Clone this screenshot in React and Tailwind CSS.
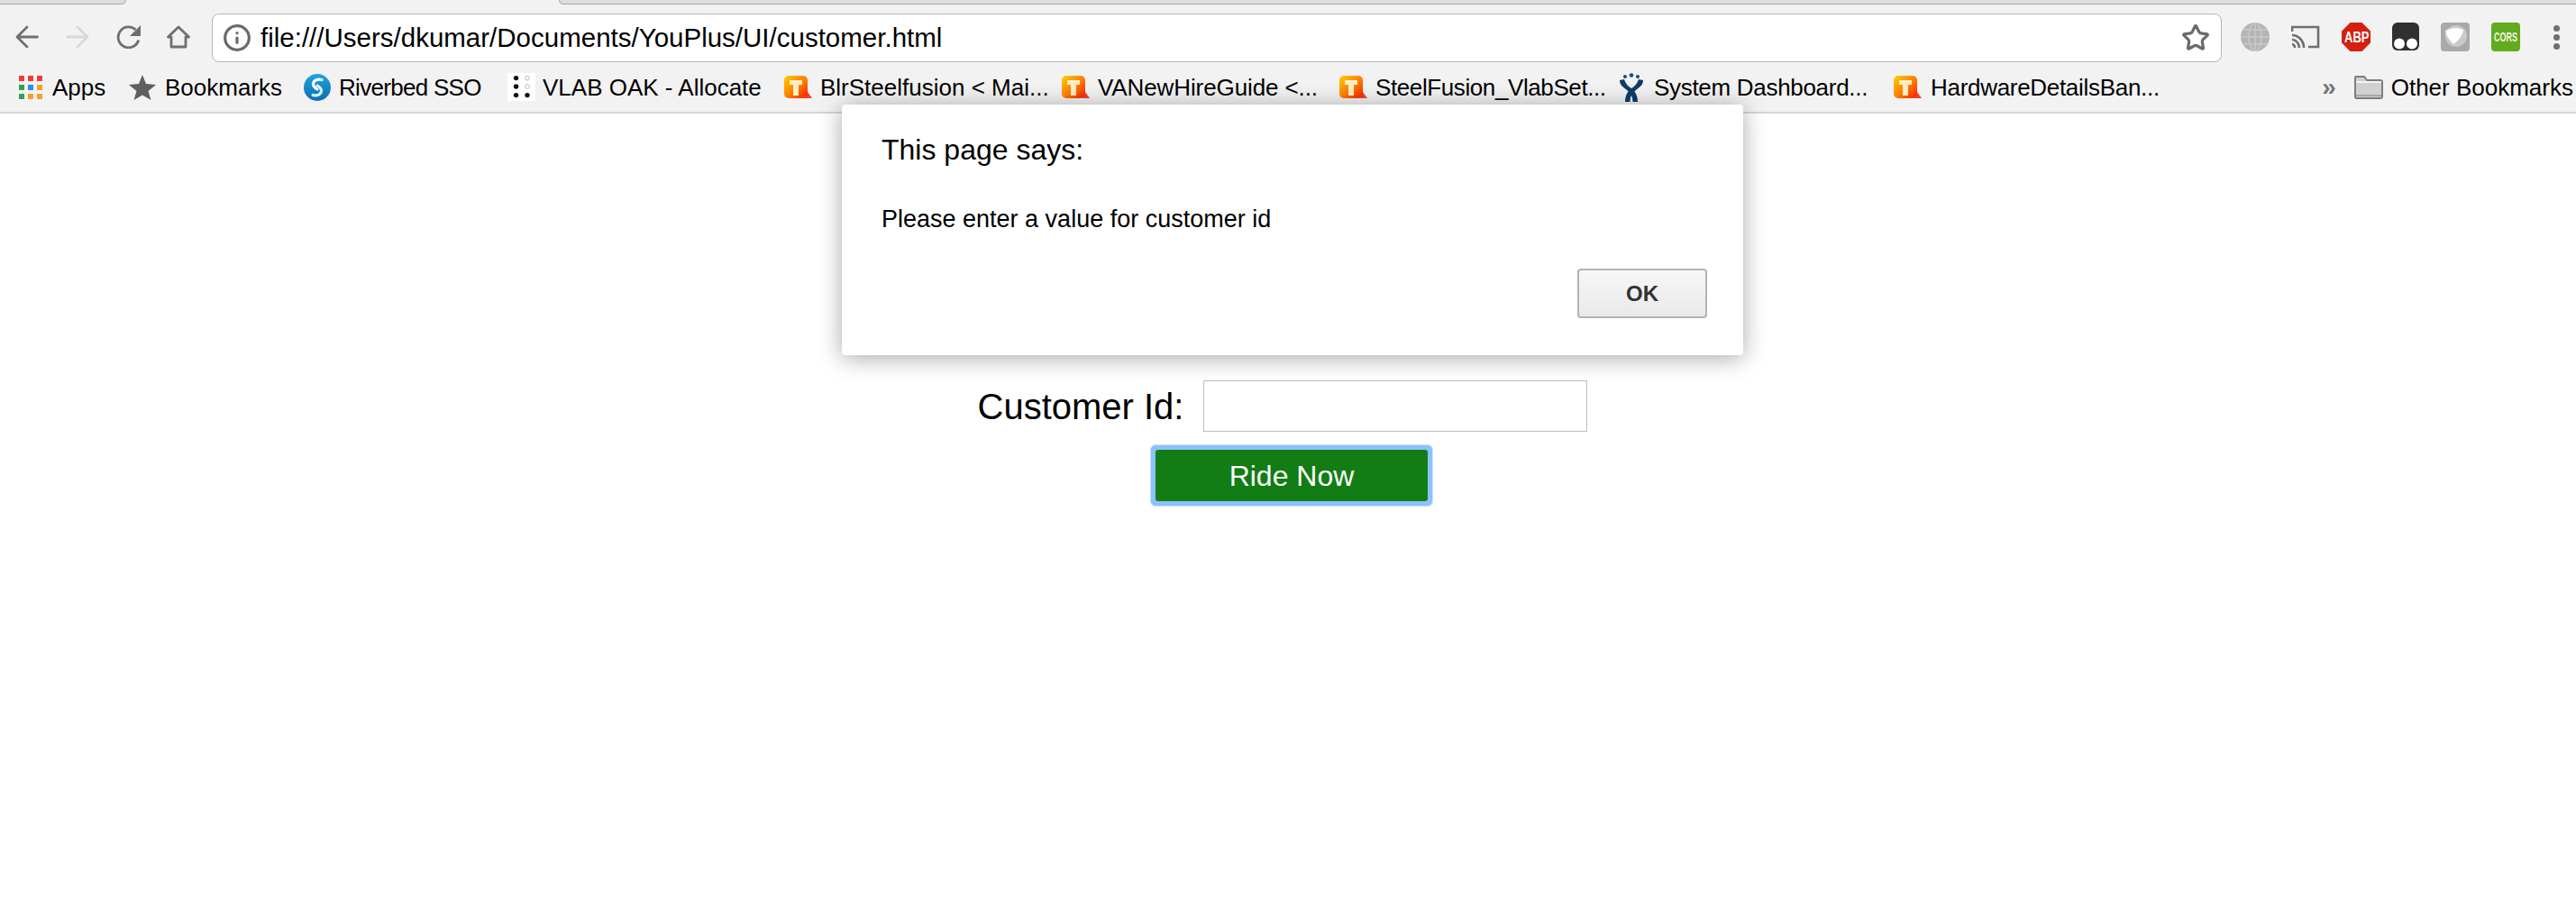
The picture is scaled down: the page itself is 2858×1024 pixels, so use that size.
import { Info, Star } from "lucide-react";

const font = "font-['Liberation_Sans',Arial,sans-serif]";

// orange "T" favicon used by several bookmarks
const TIcon = () => (
  <svg width="32" height="26" viewBox="0 0 32 26" className="shrink-0">
    <defs>
      <linearGradient id="tg" x1="0" y1="0" x2="1" y2="1">
        <stop offset="0" stopColor="#ffcf00" />
        <stop offset="0.55" stopColor="#ff7a00" />
        <stop offset="1" stopColor="#f21d00" />
      </linearGradient>
    </defs>
    <path d="M26 18l5 7h-8z" fill="#f5402a" />
    <rect x="0" y="0" width="26" height="25" rx="5" fill="url(#tg)" />
    <path d="M6 5h14v5h-4v12h-6V10H6z" fill="#ffeec4" />
  </svg>
);

const AppsIcon = () => {
  const colors = ["#f4393b", "#f4393b", "#f4393b", "#34a05a", "#2a8ff0", "#f2a227", "#34a05a", "#f2a227", "#f2a227"];
  return (
    <div className="grid grid-cols-3 gap-[4px] w-[26px] shrink-0">
      {colors.map((c, i) => (
        <div key={i} className="w-[6px] h-[6px]" style={{ background: c }} />
      ))}
    </div>
  );
};

const BookmarkStar = () => (
  <svg width="30" height="28" viewBox="0 0 30 28" className="shrink-0">
    <path d="M15 0l4 10 11 1-8.500 7 3 10-9.500-5.500L5.500 28l3-10L0 11l11-1z" fill="#5f5f5f" />
  </svg>
);

const RiverbedIcon = () => (
  <svg width="30" height="30" viewBox="0 0 30 30" className="shrink-0">
    <defs>
      <linearGradient id="rb" x1="0" y1="0" x2="0" y2="1">
        <stop offset="0" stopColor="#22a3dd" />
        <stop offset="1" stopColor="#0b6fb0" />
      </linearGradient>
    </defs>
    <circle cx="15" cy="15" r="15" fill="url(#rb)" />
    <path d="M20 6.500c-5-1.500-9.500 1-9.500 5 0 2.500 2 4 4.500 5.500" fill="none" stroke="#fff" strokeWidth="3.200" strokeLinecap="round" />
    <path d="M10 23.500c5 1.500 9.500-1 9.500-5 0-2.500-2-4-4.500-5.500" fill="none" stroke="#d8f0fb" strokeWidth="3.200" strokeLinecap="round" />
  </svg>
);

const VlabIcon = () => (
  <svg width="31" height="31" viewBox="0 0 31 31" className="shrink-0">
    <rect width="31" height="31" fill="#fff" />
    <circle cx="9.600" cy="5.600" r="2.700" fill="#111" />
    <circle cx="9.600" cy="15" r="2.700" fill="#111" />
    <circle cx="9.600" cy="24.600" r="2.700" fill="#111" />
    <circle cx="22" cy="24.600" r="2.700" fill="#111" />
    <circle cx="22" cy="5.600" r="2.400" fill="#fff" stroke="#bbb" />
    <circle cx="22" cy="15" r="2.400" fill="#fff" stroke="#bbb" />
  </svg>
);

const JiraIcon = () => (
  <svg width="26" height="32" viewBox="0 0 26 32" className="shrink-0">
    <circle cx="13" cy="2.500" r="2.300" fill="#1b4a78" />
    <circle cx="6" cy="4" r="2" fill="#1b4a78" />
    <circle cx="20" cy="4" r="2" fill="#1b4a78" />
    <path d="M0 8L5 7C7 13 10 15 13 17C17 20 20 25 20 32H14.500C14.500 26 12 22 8 19C3 15 0 13 0 8Z" fill="#0f3d68" />
    <path d="M26 8L21 7C19 13 16 15 13 17C9 20 6 25 6 32H11.500C11.500 26 14 22 18 19C23 15 26 13 26 8Z" fill="#0f3d68" />
  </svg>
);

const Bookmark = ({ icon, label, className }) => (
  <div className={`flex items-center ${className}`}>
    {icon}
    <span className="text-[26px] leading-none text-black whitespace-nowrap">{label}</span>
  </div>
);

const BackArrow = ({ className }) => (
  <svg width="26" height="26" viewBox="0 0 26 26" fill="none" stroke="currentColor" strokeWidth="2.800" strokeLinecap="round" strokeLinejoin="round" className={className}>
    <path d="M24.500 13H2M13 2L2 13l11 11" />
  </svg>
);

const ReloadIcon = () => (
  <svg width="28" height="26" viewBox="0 0 28 26" className="shrink-0">
    <path d="M21.500 5A11.500 11.500 0 1 0 24.700 16.500" fill="none" stroke="currentColor" strokeWidth="2.800" />
    <path d="M27 0v12H15z" fill="currentColor" />
  </svg>
);

const HomeIcon = () => (
  <svg width="26" height="26" viewBox="0 0 26 26" fill="none" stroke="currentColor" strokeWidth="2.800" strokeLinejoin="round" className="shrink-0">
    <path d="M1.500 13L13 2l11.500 11H21v11H5V13z" />
  </svg>
);

const Globe = () => (
  <svg width="32" height="32" viewBox="0 0 32 32" fill="none" stroke="#c9c9c9" strokeWidth="1.500">
    <circle cx="16" cy="16" r="16" fill="#b4b4b4" stroke="none" />
    <ellipse cx="16" cy="16" rx="7" ry="15.500" />
    <path d="M16 0v32M0 16h32M3 8h26M3 24h26" />
  </svg>
);

const Cast = () => (
  <svg width="32" height="26" viewBox="0 0 32 26" fill="none" stroke="#6f6f6f" strokeWidth="2.600">
    <path d="M1 7V2h29v22H19" />
    <path d="M1 11c7 0 13 6 13 14M1 16c4 0 8 4 8 9M1 21c2 0 3 2 3 4" />
  </svg>
);

const Abp = () => (
  <svg width="32" height="32" viewBox="0 0 32 32">
    <path d="M9.500 0h13L32 9.500v13L22.500 32h-13L0 22.500v-13z" fill="#d5200f" />
    <text transform="translate(3 21.500) scale(1 1.250)" fontSize="13" fontWeight="700" fill="#fff" fontFamily="Liberation Sans">ABP</text>
  </svg>
);

const Tampermonkey = () => (
  <svg width="30" height="32" viewBox="0 0 30 32">
    <rect width="30" height="31" rx="6" fill="#2f2f2f" />
    <circle cx="8" cy="23.500" r="6" fill="#fff" />
    <circle cx="22" cy="23.500" r="6" fill="#fff" />
  </svg>
);

const GreyExt = () => (
  <svg width="32" height="32" viewBox="0 0 32 32">
    <rect width="32" height="32" rx="4" fill="#a9a9a9" />
    <circle cx="17" cy="15" r="12" fill="#c9c9c9" />
    <path d="M5 9c5-3 14-4 20-1-1 8-6 12-11 16-4-4-8-9-9-15z" fill="#fff" />
  </svg>
);

const Cors = () => (
  <svg width="32" height="32" viewBox="0 0 32 32">
    <rect width="32" height="32" rx="4" fill="#63ab1e" />
    <text transform="translate(3 21) scale(0.820 1.400)" fontSize="11" fontWeight="700" fill="#eef7df" fontFamily="Liberation Sans">CORS</text>
  </svg>
);

const FolderIcon = () => (
  <svg width="32" height="26" viewBox="0 0 32 26" className="shrink-0">
    <path d="M1 2a1 1 0 0 1 1-1h9l3 4h15a2 2 0 0 1 2 2v16a2 2 0 0 1-2 2H3a2 2 0 0 1-2-2z" fill="#d0d0d0" stroke="#7d7d7d" strokeWidth="2" />
    <path d="M2 7h28" stroke="#f4f4f4" strokeWidth="2" />
    <path d="M2 21h28v2H2z" fill="#a8a8a8" />
  </svg>
);

export default function App() {
  return (
    <div className={`relative w-[2858px] h-[1024px] bg-white overflow-hidden ${font}`}>
      {/* tab strip */}
      <div className="h-[5px] flex bg-[#f2f2f2]">
        <div className="w-[140px] bg-[#dcdddf] border-b border-r border-[#a8a8a8] rounded-br-[6px]" />
        <div className="w-[480px]" />
        <div className="flex-1 bg-[#dcdddf] border-b border-l border-[#a8a8a8] rounded-bl-[6px]" />
      </div>

      {/* toolbar */}
      <div className="h-[64px] bg-[#f2f2f2] flex items-start pt-[10px]">
        <div className="w-[235px] h-[54px] flex items-center pb-[3px] pl-[17px] text-[#6f6f6f] shrink-0">
          <BackArrow />
          <BackArrow className="ml-[30px] rotate-180 text-[#d8d8d8]" />
          <div className="ml-[30px]"><ReloadIcon /></div>
          <div className="ml-[28px]"><HomeIcon /></div>
        </div>
        <div className="w-[2230px] h-[54px] bg-white border border-[#b5b5b5] rounded-[8px] flex items-center pl-[11px] pr-[12px] shrink-0">
          <Info size={32} strokeWidth={2.4} className="text-[#6a6a6a] shrink-0" />
          <span className="ml-[10px] text-[29.500px] leading-none text-black">file:///Users/dkumar/Documents/YouPlus/UI/customer.html</span>
          <Star size={32} strokeWidth={2.4} className="ml-auto text-[#6a6a6a]" />
        </div>
        <div className="h-[54px] flex items-center pb-[2px] pl-[21px] gap-[24px]">
          <Globe />
          <Cast />
          <Abp />
          <Tampermonkey />
          <GreyExt />
          <Cors />
          <div className="ml-[13px] flex flex-col gap-[3px]">
            <div className="w-[7px] h-[7px] rounded-full bg-[#6f6f6f]" />
            <div className="w-[7px] h-[7px] rounded-full bg-[#6f6f6f]" />
            <div className="w-[7px] h-[7px] rounded-full bg-[#6f6f6f]" />
          </div>
        </div>
      </div>

      {/* bookmarks bar */}
      <div className="h-[57px] bg-[#f2f2f2] border-b-2 border-[#d4d4d4] flex items-center">
        <Bookmark icon={<AppsIcon />} label="Apps" className="ml-[21px] w-[122px] gap-[11px]" />
        <Bookmark icon={<BookmarkStar />} label="Bookmarks" className="w-[194px] gap-[10px]" />
        <Bookmark icon={<RiverbedIcon />} label="Riverbed SSO" className="w-[226px] gap-[9px] tracking-[-0.7px]" />
        <Bookmark icon={<VlabIcon />} label="VLAB OAK - Allocate" className="w-[307px] gap-[8px]" />
        <Bookmark icon={<TIcon />} label="BlrSteelfusion < Mai..." className="w-[308px] gap-[8px]" />
        <Bookmark icon={<TIcon />} label="VANewHireGuide <..." className="w-[308px] gap-[8px] tracking-[-0.1px]" />
        <Bookmark icon={<TIcon />} label="SteelFusion_VlabSet..." className="w-[311px] gap-[8px] tracking-[-0.4px]" />
        <Bookmark icon={<JiraIcon />} label="System Dashboard..." className="w-[304px] gap-[12px] tracking-[-0.3px]" />
        <Bookmark icon={<TIcon />} label="HardwareDetailsBan..." className="w-[320px] gap-[9px] tracking-[-0.3px]" />
        <span className="ml-auto mr-[20px] text-[28px] font-bold leading-none text-[#777]">»</span>
        <Bookmark icon={<FolderIcon />} label="Other Bookmarks" className="shrink-0 gap-[9px] mr-[3px]" />
      </div>

      {/* page content */}
      <div className="flex flex-col items-center pt-[296px]">
        <div className="flex items-center ml-[-12px]">
          <label className="text-[40px] leading-none text-black">Customer Id:</label>
          <input className="ml-[22px] w-[426px] h-[57px] border border-[#bebebe] bg-white" />
        </div>
        <div className="mt-[14px] ml-[8px] p-[5px] bg-[#8cc2fb] rounded-[6px] border border-[#c9e1fd]">
          <button className="block w-[302px] h-[57px] bg-[#117d14] rounded-[3px] text-white text-[32px] leading-none">
            Ride Now
          </button>
        </div>
      </div>

      {/* alert dialog */}
      <div className="absolute left-[934px] top-[116px] w-[1000px] h-[278px] bg-white rounded-[4px] shadow-[0_3px_26px_rgba(0,0,0,0.35)] pl-[44px] pr-[40px] pt-[30px] flex flex-col">
        <div className="text-[32px] leading-[40px] text-black">This page says:</div>
        <div className="mt-[41px] text-[27px] leading-[32px] text-black">Please enter a value for customer id</div>
        <button className="self-end mt-[39px] w-[144px] h-[55px] rounded-[4px] border-2 border-[#b3b3b3] bg-gradient-to-b from-[#f7f7f7] to-[#e9e9e9] text-[24px] font-bold text-[#333]">
          OK
        </button>
      </div>
    </div>
  );
}
